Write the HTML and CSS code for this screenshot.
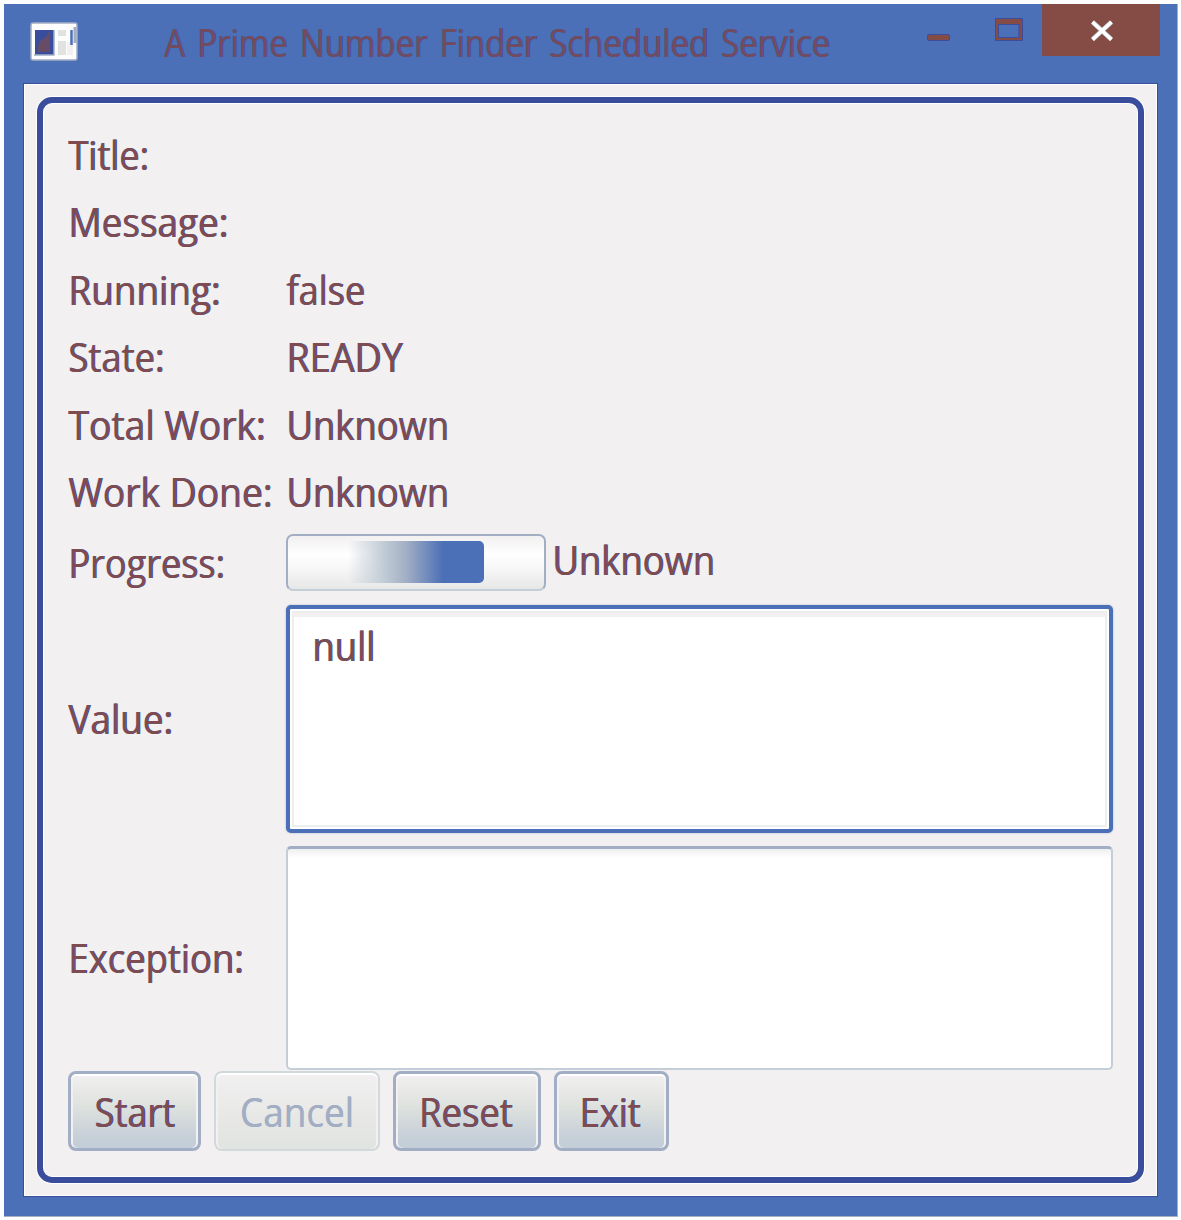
FILE: index.html
```html
<!DOCTYPE html>
<html lang="en">
<head>
<meta charset="utf-8">
<title>A Prime Number Finder Scheduled Service</title>
<link rel="stylesheet" href="styles.css">
</head>
<body>
<div class="window">
  <header class="titlebar">
    <svg class="app-icon" width="48" height="40" viewBox="0 0 48 40">
      <rect x="1" y="1" width="46" height="37" rx="2" fill="#fdfdfd" stroke="#a2aec4" stroke-width="1.500"/>
      <rect x="5" y="8" width="19" height="25" fill="#3a4c9c"/>
      <path d="M8 30V24L11 18L15 16L20 9V30Z" fill="#844c44" opacity=".6"/>
      <path d="M24 8V33H4" fill="none" stroke="#a2aec4" stroke-width="1.5"/>
      <path d="M28 8H36V14H28ZM28 19H36V33H28Z" fill="#e0e3df"/>
      <path d="M37 20H43V33H37Z" fill="#f2f0f1"/>
      <path d="M41.500 8V23" stroke="#4b70b7" stroke-width="2.500"/>
      <path d="M45 5V21" stroke="#a2aec4" stroke-width="3"/>
    </svg>
    <h1 class="title">A Prime Number Finder Scheduled Service</h1>
    <div class="controls">
      <svg width="102" height="52" viewBox="0 0 102 52">
        <rect x=".5" y="30.5" width="22" height="6" rx="1.5" fill="#844c44" stroke="#3a4c9c"/>
        <path d="M68.500 14.500H95.500V36.500H68.500Z M71.500 20.500V33.500H92V20.500Z" fill="#844c44" fill-rule="evenodd" stroke="#3a4c9c"/>
      </svg>
      <button class="close" aria-label="Close">
        <svg width="24" height="22" viewBox="0 0 24 22"><path d="M2.500 2L21.500 19.500M21.500 2L2.500 19.500" stroke="#c4ced8" stroke-width="4.500"/><path d="M2.500 2L21.500 19.500M21.500 2L2.500 19.500" stroke="#fff" stroke-width="3.200"/></svg>
      </button>
    </div>
  </header>
  <main class="client">
    <div class="panel">
      <div class="form">
        <span class="label w90">Title:</span><span></span>
        <span class="label w92">Message:</span><span></span>
        <span class="label w92">Running:</span><span class="text w90">false</span>
        <span class="label w91">State:</span><span class="text w94">READY</span>
        <span class="label w93">Total Work:</span><span class="text w91">Unknown</span>
        <span class="label w93">Work Done:</span><span class="text w91">Unknown</span>
        <span class="label w90 progress-label">Progress:</span>
        <div class="progress-row">
          <div class="progress"><div class="bar"></div></div>
          <span class="text w91">Unknown</span>
        </div>
        <span class="label w92 value-label">Value:</span><div class="area focused"><span class="text w91">null</span></div>
        <span class="label w91 exception-label">Exception:</span><div class="area"></div>
      </div>
      <div class="buttons">
        <button class="btn start"><span class="w90">Start</span></button>
        <button class="btn cancel" disabled><span class="w92">Cancel</span></button>
        <button class="btn reset"><span class="w91">Reset</span></button>
        <button class="btn exit"><span class="w90">Exit</span></button>
      </div>
    </div>
  </main>
</div>
</body>
</html>
```
FILE: styles.css
```css
* { box-sizing: border-box; }
body {
  margin: 0;
  padding: 4px;
  background: #fdfdfd;
  font-family: "Open Sans", "Noto Sans", sans-serif;
  font-size: 40px;
  color: #7e4b50;
  text-shadow: 1px 0 #3a4c9c;
}
.window {
  width: 1174px;
  height: 1213px;
  padding: 0 20px 21px;
  background: #4b70b7;
  border: 1px solid #a2aec4;
  border-width: 0 1px 1px 0;
}
.titlebar {
  display: flex;
  height: 80px;
  margin-right: -3px;
  padding-left: 6px;
}
.app-icon { margin-top: 18px; flex: none; }
.title {
  margin: 0 0 0 86px;
  font-size: 38px;
  font-weight: 400;
  line-height: 76px;
  white-space: nowrap;
  width: 666px;
  word-spacing: 4px;
  color: #744b5c;
  transform: scaleX(.867);
  transform-origin: left;
}
.controls { display: flex; margin-left: auto; }
.controls > svg { margin-right: 13px; }
.close {
  display: grid;
  place-items: center;
  width: 118px;
  height: 52px;
  padding: 2px 0 0 2px;
  border: 0;
  background: #844c44;
}
.client {
  height: 1112px;
  width: 1133px;
  padding: 12px;
  background: #f2f0f1;
  border: 1px solid #fff;
  outline: 1px solid #3a4c9c;
}
.panel {
  height: 1086px;
  width: 1107px;
  padding: 19px 26px 0 25px;
  border: 6px solid #3a4c9c;
  border-radius: 15px;
  box-shadow: 0 0 0 1px #fff, inset 0 0 0 1px #fff;
}
.form {
  display: grid;
  grid-template-columns: 218px 827px;
  grid-template-rows: repeat(6, 67.500px) 70px 242px 232px;
  align-items: center;
}
.label, .text { height: 54px; line-height: 52px; white-space: nowrap; transform-origin: left; }
/* Horizontal condensing of the UI typeface, per string */
.w90 { transform: scaleX(.902); }
.w91 { transform: scaleX(.91); }
.w92 { transform: scaleX(.922); }
.w93 { transform: scaleX(.931); }
.w94 { transform: scaleX(.942); }
.progress-row { display: flex; align-items: center; gap: 6px; }
.progress-row .text { margin-top: -2px; }
.progress-label { padding-top: 2px; }
.value-label { padding-top: 2px; }
.exception-label { padding-top: 4px; }
.progress {
  width: 260px;
  height: 57px;
  padding: 5px 60px;
  border: 2px solid #c4ced8;
  border-color: #a2aec4 #a2aec4 #c4ced8;
  border-radius: 7px;
  background: linear-gradient(#f2f0f1, #fff 35%, #f8f7f7 60%, #e7e7e7);
}
.bar {
  width: 136px;
  height: 42px;
  border-radius: 5px;
  background: linear-gradient(90deg, #fff0, #c4ced8 25%, #a2aec4 43%, #4b70b7 70%);
}
.area {
  align-self: end;
  height: 224px;
  margin-bottom: 1px;
  padding: 12px 25px;
  line-height: 52px;
  background: linear-gradient(#f0eff0, #fff 9px);
  border: 2px solid #c4ced8;
  border-top: 3px solid #a2aec4;
  border-radius: 5px;
}
.area .text { display: inline-block; }
.focused {
  height: 228px;
  margin-bottom: 6px;
  border: 4px solid #4b70b7;
  padding: 11px 22px;
  background: #fff;
  box-shadow: 0 0 2px #a2aec4, inset 0 0 0 2px #fff, inset 0 0 0 4px #eeefed, inset 0 8px #f2f0f1;
}
.buttons { display: flex; gap: 13px; }
.btn {
  height: 80px;
  padding: 0;
  font: inherit;
  color: inherit;
  text-shadow: inherit;
  border: 3px solid #a2aec4;
  border-radius: 8px;
  background: linear-gradient(#f2f0f1, #e0e3df 40%, #c4ced8 90%);
  box-shadow: inset 0 2px #fff, inset 2px 0 #f2f0f1, inset -2px 0 #f2f0f1;
}
.btn span { display: inline-block; }
.start { width: 133px; }
.cancel {
  width: 166px;
  color: #a2aec4;
  text-shadow: .5px 0 #a2aec4;
  border: 2px solid #d2d9dc;
  background: linear-gradient(#f2f0f1, #e0e3df);
}
.reset { width: 148px; padding-right: 3px; }
.exit { width: 115px; padding-right: 4px; }
```
